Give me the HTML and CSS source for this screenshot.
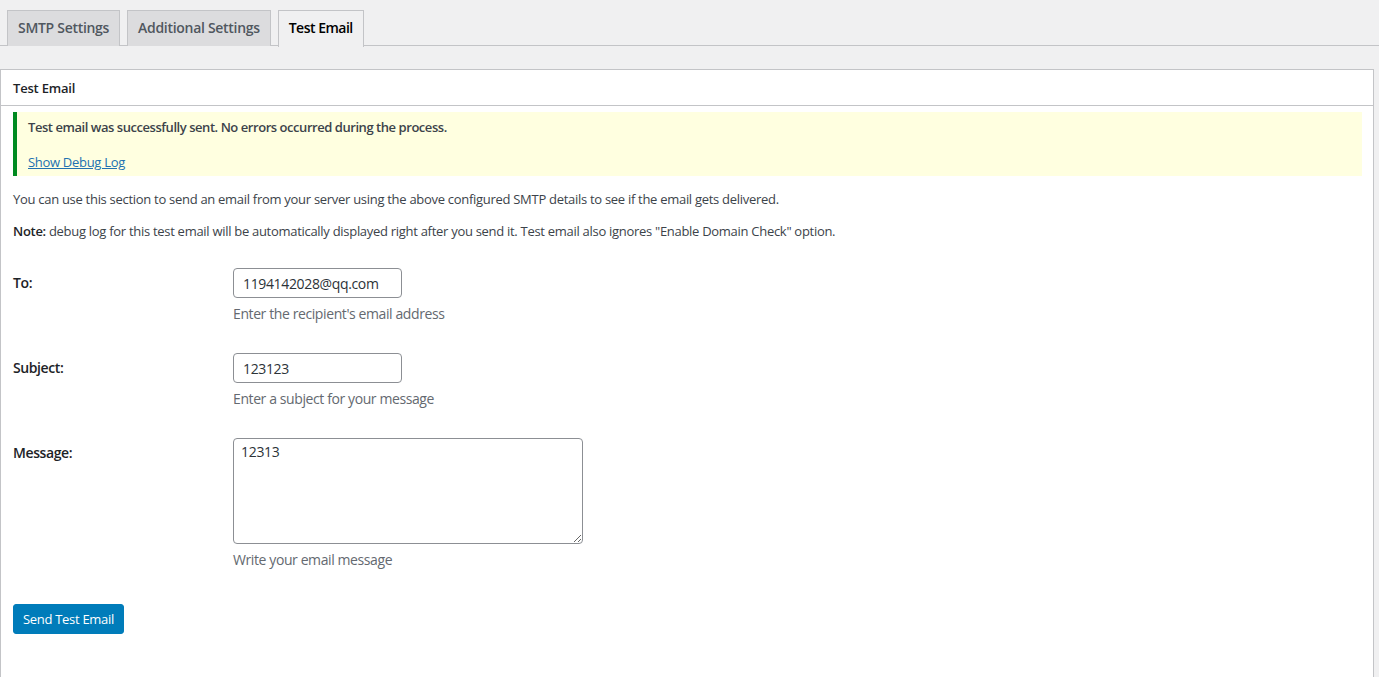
FILE: index.html
```html
<!DOCTYPE html>
<html>
<head>
<meta charset="utf-8">
<link rel="stylesheet" href="styles.css">
</head>
<body>
<div class="wrap">
  <nav class="tabs">
    <a class="tab">SMTP Settings</a>
    <a class="tab">Additional Settings</a>
    <a class="tab active">Test Email</a>
  </nav>
  <div class="panel">
    <h3 class="panel-head">Test Email</h3>
    <div class="panel-body">
      <div class="notice">
        <p class="notice-msg">Test email was successfully sent. No errors occurred during the process.</p>
        <p class="notice-link"><a href="#">Show Debug Log</a></p>
      </div>
      <p class="text">You can use this section to send an email from your server using the above configured SMTP details to see if the email gets delivered.</p>
      <p class="text"><strong>Note:</strong> debug log for this test email will be automatically displayed right after you send it. Test email also ignores "Enable Domain Check" option.</p>
      <div class="form">
        <div class="row">
          <label class="label">To:</label>
          <div class="field">
            <input class="input" type="text" value="1194142028@qq.com">
            <p class="desc">Enter the recipient's email address</p>
          </div>
        </div>
        <div class="row">
          <label class="label">Subject:</label>
          <div class="field">
            <input class="input" type="text" value="123123">
            <p class="desc">Enter a subject for your message</p>
          </div>
        </div>
        <div class="row">
          <label class="label">Message:</label>
          <div class="field">
            <textarea class="textarea">12313</textarea>
            <p class="desc">Write your email message</p>
          </div>
        </div>
      </div>
      <button class="button">Send Test Email</button>
    </div>
  </div>
</div>
</body>
</html>
```

FILE: styles.css
```css
* { box-sizing: border-box; }
html, body { margin: 0; padding: 0; }
body {
  background: #f0f0f1;
  font-family: "Open Sans", "Noto Sans", sans-serif;
  color: #3c434a;
  font-size: 13px;
  height: 677px;
  overflow: hidden;
}
.wrap { padding-top: 10px; }
.tabs {
  display: flex;
  gap: 7px;
  padding-left: 7px;
  border-bottom: 1px solid #c3c4c7;
  height: 36px;
}
.tab {
  display: block;
  height: 36px;
  padding: 0 10px;
  border: 1px solid #c3c4c7;
  border-bottom: none;
  background: #dcdcde;
  color: #50575e;
  font-size: 14px;
  font-weight: 600;
  line-height: 34px;
  letter-spacing: -0.3px;
}
.tab.active {
  background: #f0f0f1;
  color: #000;
  height: 37px;
  margin-bottom: -1px;
  letter-spacing: -0.5px;
}
.panel {
  margin-top: 23px;
  margin-right: 5px;
  background: #fff;
  border: 1px solid #c3c4c7;
  border-bottom: none;
  height: 608px;
}
.panel-head {
  margin: 0;
  height: 36px;
  padding: 0 12px;
  font-size: 13px;
  font-weight: 600;
  line-height: 36px;
  color: #1d2327;
  border-bottom: 1px solid #c3c4c7;
  letter-spacing: -0.2px;
}
.panel-body { padding: 6px 11px 0 12px; }
.notice {
  background: #ffffe0;
  border-left: 4px solid #008a20;
  padding: 6px 12px 5px 11px;
}
.notice p { margin: 0; line-height: 18px; }
.notice-msg { font-weight: 600; color: #3c434a; letter-spacing: -0.45px; }
.notice-link { margin-top: 17px !important; }
.notice-link a { color: #2271b1; text-decoration: underline; letter-spacing: -0.3px; }
.text { margin: 14px 0 0; line-height: 18px; letter-spacing: -0.29px; }
.text + .text { margin-top: 14px; }
.text strong { font-weight: 600; color: #1d2327; }
.form { margin-top: 28px; }
.row { display: flex; margin-bottom: 29px; }
.label {
  width: 220px;
  padding-top: 5px;
  font-size: 14px;
  font-weight: 600;
  color: #1d2327;
  letter-spacing: -0.4px;
}
.field { display: flex; flex-direction: column; align-items: flex-start; }
.input {
  width: 169px;
  height: 30px;
  border: 1px solid #8c8f94;
  border-radius: 4px;
  padding: 0 9px;
  font-family: inherit;
  font-size: 14px;
  color: #2c3338;
  letter-spacing: -0.35px;
}
.textarea {
  width: 350px;
  height: 106px;
  border: 1px solid #8c8f94;
  border-radius: 4px;
  padding: 3px 7px;
  font-family: inherit;
  font-size: 14px;
  color: #2c3338;
  resize: both;
  letter-spacing: -0.3px;
}
.desc {
  margin: 6px 0 0;
  font-size: 14px;
  color: #646970;
  line-height: 20px;
  letter-spacing: -0.4px;
}
.button {
  margin-top: 5px;
  height: 30px;
  width: 111px;
  background: #007cba;
  border: 1px solid #007cba;
  border-radius: 3px;
  color: #fff;
  font-family: inherit;
  font-size: 13px;
  padding: 0;
  letter-spacing: -0.3px;
}
```
